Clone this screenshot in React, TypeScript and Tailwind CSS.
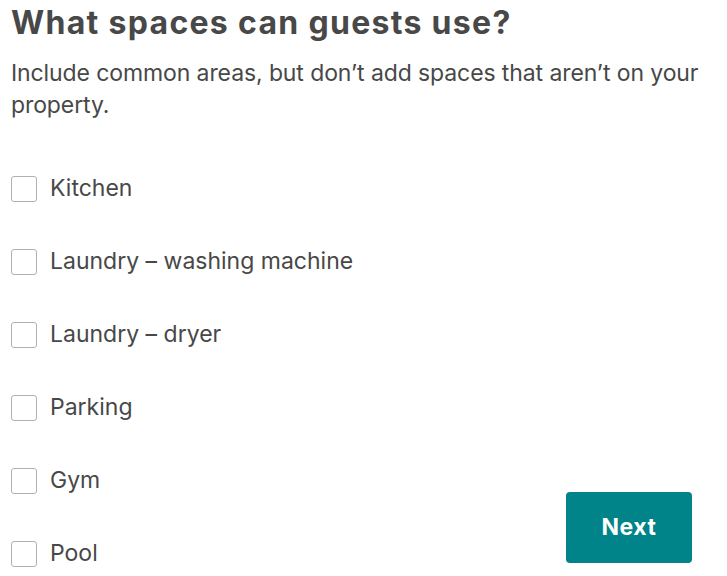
import React, { useState } from 'react'

const spaces = [
  'Kitchen',
  'Laundry – washing machine',
  'Laundry – dryer',
  'Parking',
  'Gym',
  'Pool',
]

export default function App() {
  const [checked, setChecked] = useState<Record<string, boolean>>({})

  return (
    <div
      className="h-screen overflow-hidden bg-white text-[#484848] pl-[11px] pr-[6px] pt-[3px]"
      style={{ fontFamily: 'Inter, "Noto Sans", sans-serif' }}
    >
      <h1 className="text-[32px] leading-[40px] font-bold tracking-[1.3px]">
        What spaces can guests use?
      </h1>
      <p className="mt-[14px] text-[23px] leading-[32px] font-normal tracking-[-0.1px]">
        Include common areas, but don’t add spaces that aren’t on your property.
      </p>

      <div className="flex items-end justify-between pr-[29px]">
        <ul className="mt-[55px]">
          {spaces.map((name) => (
            <li key={name} className="h-[73px] flex items-start">
              <label className="flex items-center gap-[13px] cursor-pointer">
                <button
                  type="button"
                  onClick={() => setChecked((c) => ({ ...c, [name]: !c[name] }))}
                  className={`w-[26px] h-[26px] rounded-[3px] border-[1.5px] ${
                    checked[name] ? 'bg-[#008489] border-[#008489]' : 'border-[#b0b0b0] bg-white'
                  }`}
                />
                <span className="text-[23px] leading-[26px] -mt-[2px]">{name}</span>
              </label>
            </li>
          ))}
        </ul>
        <button className="mb-[51px] w-[126px] h-[71px] rounded-[4px] bg-[#008489] text-white text-[23px] font-bold tracking-[0.5px]">
          Next
        </button>
      </div>
    </div>
  )
}
